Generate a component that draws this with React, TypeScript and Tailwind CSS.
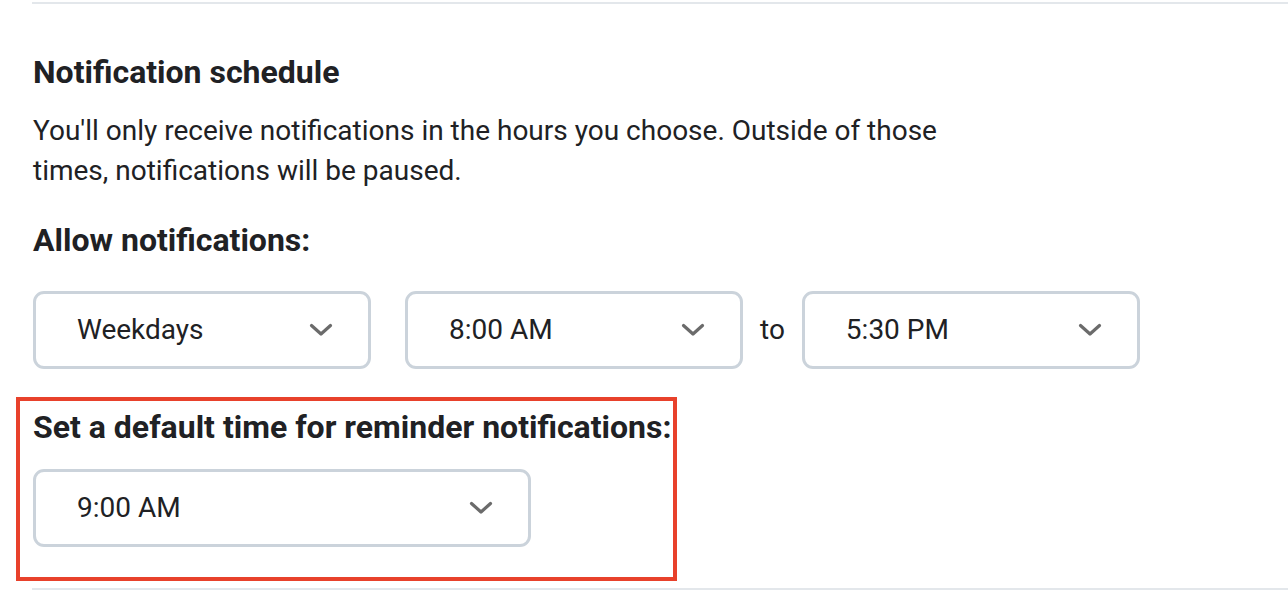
import React from 'react';

function Chevron() {
  return (
    <svg width="24" height="14" viewBox="0 0 24 14" fill="none" className="shrink-0">
      <path d="M2.5 2.5 L12 11 L21.5 2.5" stroke="#6b6b6b" strokeWidth="3.2" strokeLinecap="round" strokeLinejoin="round" />
    </svg>
  );
}

function Select({ value, width }: { value: string; width: string }) {
  return (
    <div
      className={`${width} h-[78px] flex items-center justify-between pl-[41px] pr-[35px] rounded-[11px] border-[3px] border-[#cbd3db] bg-white`}
    >
      <span className="text-[28px] text-[#202124]">{value}</span>
      <Chevron />
    </div>
  );
}

export default function App() {
  return (
    <div
      className="w-[1288px] h-[594px] bg-white overflow-hidden text-[#202124]"
      style={{ fontFamily: 'Roboto, "Liberation Sans", sans-serif' }}
    >
      <div className="ml-[32px] mt-[2px] h-[2px] bg-[#e3e7eb]" />
      <div className="pl-[33px]">
        <h2 className="mt-[48px] text-[32px] leading-[40px] font-bold">Notification schedule</h2>
        <p className="mt-[19px] text-[28px] leading-[40px] max-w-[920px]">
          You'll only receive notifications in the hours you choose. Outside of those times, notifications will be paused.
        </p>
        <h3 className="mt-[29px] text-[32px] leading-[40px] font-bold">Allow notifications:</h3>
        <div className="mt-[31px] flex items-center">
          <Select value="Weekdays" width="w-[338px]" />
          <div className="w-[34px]" />
          <Select value="8:00 AM" width="w-[338px]" />
          <span className="mx-[17px] text-[28px]">to</span>
          <Select value="5:30 PM" width="w-[338px]" />
        </div>
        <div className="relative mt-[28px] pb-[34px]">
          <div className="absolute -left-[17px] top-0 w-[661px] h-[184px] border-[4px] border-[#e8412b] pointer-events-none" />
          <h3 className="pt-[10px] text-[32px] leading-[40px] font-bold">Set a default time for reminder notifications:</h3>
          <div className="mt-[22px]">
            <Select value="9:00 AM" width="w-[498px]" />
          </div>
        </div>
      </div>
      <div className="ml-[32px] mt-[7px] h-[2px] bg-[#e3e7eb]" />
    </div>
  );
}
